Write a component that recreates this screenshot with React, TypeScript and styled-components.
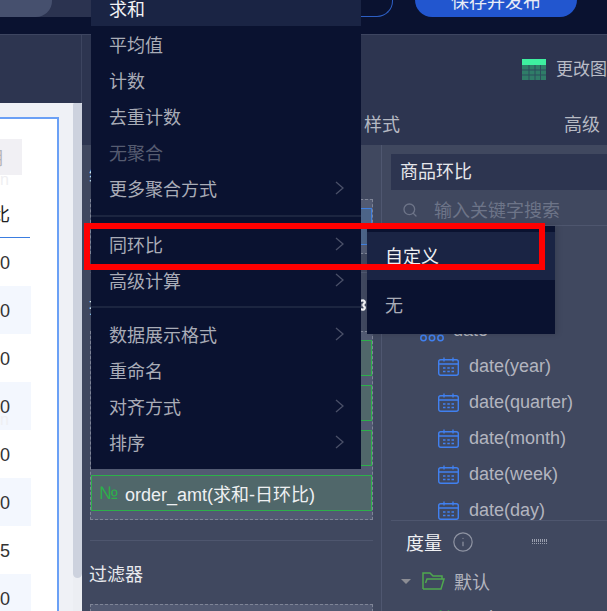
import React from 'react';
import styled, { createGlobalStyle } from 'styled-components';
import { Search, Settings, Info } from 'lucide-react';

const GlobalStyle = createGlobalStyle`
    html, body {
        margin: 0;
        padding: 0;
        background: #0a1230;
    }
    * {
        box-sizing: border-box;
    }
`;

const Page = styled.div`
    position: relative;
    width: 607px;
    height: 611px;
    overflow: hidden;
    background: #0a1230;
    font-family: 'Liberation Sans', 'Noto Sans CJK SC', sans-serif;
    font-size: 18px;
`;

/* top bar */
const TopBar = styled.header`
    display: flex;
    height: 34px;
    background: #0a1230;
`;

const TopStrip = styled.div`
    width: 333px;
    height: 17px;
    background: #2b3350;
`;

const TopPill = styled.div`
    width: 52px;
    height: 17px;
    background: #46506e;
    border-bottom-right-radius: 16px;
`;

const OutlineButton = styled.div`
    width: 60px;
    height: 17px;
    border-right: 1px solid #2d5fc4;
    border-bottom: 1px solid #2d5fc4;
    border-bottom-right-radius: 16px;
`;

const PublishButton = styled.button`
    width: 162px;
    height: 34px;
    margin: -17px 0 0 22px;
    border: 0;
    padding: 0;
    border-radius: 17px;
    background: #2256cf;
    color: #e8ecf6;
    font: inherit;
`;

/* chart toolbar */
const Toolbar = styled.div`
    display: flex;
    align-items: center;
    height: 69px;
    background: #2d3550;
    border-top: 1px solid #3d4560;
    white-space: nowrap;
    overflow: hidden;
`;

const ToolbarLeft = styled.div`
    flex: none;
    align-self: stretch;
    width: 82px;
    border-right: 1px solid #3d4560;
    margin-right: 440px;
`;

const ChartType = styled.div`
    flex: none;
    display: flex;
    align-items: center;
    gap: 10px;
    color: #b9bcc6;
    font-size: 17px;
    line-height: 22px;
`;

const ChartTypeLabel = styled.span`
    padding-top: 1px;
`;

/* body */
const Body = styled.div`
    display: flex;
    height: 508px;
`;

const Canvas = styled.div`
    flex: none;
    width: 73px;
    padding-top: 14px;
    background: #eff1f6;
    overflow: hidden;
`;

const Card = styled.div`
    position: relative;
    width: 59px;
    height: 494px;
    padding-top: 20px;
    background: #fff;
    border-top: 2px solid #6ba0f5;
    border-right: 2px solid #6ba0f5;
`;

const HeadCell = styled.div`
    display: flex;
    justify-content: flex-end;
    align-items: center;
    width: 22px;
    height: 36px;
    padding-right: 19px;
    background: #f1f0f4;
    color: #b5b5b8;
    font-size: 18px;
    white-space: nowrap;
    overflow: hidden;
`;

const ColumnHead = styled.div`
    display: flex;
    align-items: flex-end;
    justify-content: flex-end;
    width: 30px;
    height: 63px;
    padding: 0 20px 11px 0;
    border-bottom: 1px solid #3b7de0;
    color: #222;
    white-space: nowrap;
`;

const Row = styled.div<{ $striped: boolean }>`
    display: flex;
    align-items: center;
    width: 31px;
    height: 48px;
    padding-top: 2px;
    background: ${(props) => (props.$striped ? '#f3f7fe' : '#fff')};
    color: #333;
`;

const Watermark = styled.span<{ $top: number }>`
    position: absolute;
    left: 0;
    top: ${(props) => props.$top}px;
    color: #efeff2;
    font-size: 16px;
`;

const ScrollTrack = styled.div`
    flex: none;
    width: 9px;
    background: #eceef3;
`;

const ScrollThumb = styled.div`
    height: 475px;
    background: #cdd2de;
    border-radius: 2px 2px 6px 6px;
`;

const Editor = styled.div`
    flex: 1;
    min-width: 0;
    display: flex;
    flex-direction: column;
    background: #40485f;
`;

const Tabs = styled.div`
    flex: none;
    display: flex;
    height: 42px;
    background: #2d3550;
    overflow: hidden;
`;

const Tab = styled.div`
    flex: none;
    width: 200px;
    text-align: center;
    line-height: 44px;
    color: #b6b9c3;
`;

const Panels = styled.div`
    flex: 1;
    min-height: 0;
    display: flex;
    overflow: hidden;
`;

/* field config */
const ConfigPanel = styled.div`
    flex: none;
    width: 299px;
    padding: 10px 8px 0;
`;

const SectionLabel = styled.div<{ $gap: number; $after: number }>`
    display: flex;
    justify-content: space-between;
    align-items: center;
    height: 36px;
    margin: ${(props) => props.$gap}px -6px ${(props) => props.$after}px -1px;
    padding-right: 12px;
    color: #e8e9ed;
`;

const DropZone = styled.div`
    display: flex;
    flex-direction: column;
    gap: 9px;
    padding: 8px 0;
    background: #525a72;
    border: 1px dashed #7f8597;
`;

const FieldPill = styled.div<{ $tone: 'blue' | 'green' }>`
    display: flex;
    align-items: center;
    gap: 7px;
    height: ${(props) => (props.$tone === 'blue' ? 37 : 36)}px;
    padding-left: 7px;
    background: ${(props) => (props.$tone === 'blue' ? '#4c6488' : '#50676a')};
    border: 1px solid ${(props) => (props.$tone === 'blue' ? '#3f7fe0' : '#2cb04a')};
    color: #eef0f2;
    white-space: nowrap;
`;

const MeasureMark = styled.span`
    flex: none;
    width: 19px;
    color: #2cb04a;
    font-size: 18px;
`;

const Divider = styled.div<{ $top: number }>`
    height: 1px;
    margin-top: ${(props) => props.$top}px;
    background: #4e566e;
`;

/* data list */
const DataPanel = styled.div`
    flex: 1;
    min-width: 0;
    padding: 9px 0 0 9px;
    border-left: 1px solid #4f5770;
`;

const DatasetName = styled.div`
    height: 36px;
    padding-left: 9px;
    line-height: 37px;
    background: #2d3550;
    color: #e6e7eb;
`;

const SearchRow = styled.div`
    display: flex;
    align-items: center;
    height: 36px;
    padding: 3px 0 0 11px;
    gap: 16px;
    border-bottom: 1px solid #4e566e;
    color: #6d7488;
    white-space: nowrap;
    svg {
        flex: none;
        margin-top: 1px;
    }
`;

const TreeList = styled.div`
    height: 295px;
    padding-top: 86px;
    overflow: hidden;
    border-bottom: 1px solid #4e566e;
`;

const TreeRow = styled.div<{ $indent: number; $gap: number }>`
    display: flex;
    align-items: center;
    gap: ${(props) => props.$gap}px;
    height: 36px;
    padding-left: ${(props) => props.$indent}px;
    color: #b3b5bf;
    white-space: nowrap;
`;

const GroupRow = styled.div`
    display: flex;
    align-items: center;
    height: 42px;
    padding-left: 15px;
    color: #f0f1f4;
`;

const InfoMark = styled.span`
    display: flex;
    margin-left: 10px;
    color: #8f94a3;
`;

const GridMark = styled.svg`
    margin-left: 58px;
`;

const FolderRow = styled.div`
    display: flex;
    align-items: center;
    height: 36px;
    padding-left: 10px;
    color: #b3b5bf;
`;

const FolderName = styled.span`
    margin-left: 9px;
`;

const Caret = styled.span`
    width: 0;
    height: 0;
    margin-right: 11px;
    border-left: 5px solid transparent;
    border-right: 5px solid transparent;
    border-top: 5px solid #8c8d94;
`;

/* overlays */
const Menu = styled.div`
    position: absolute;
    left: 91px;
    top: -10px;
    width: 270px;
    padding-bottom: 9px;
    background: #0a1230;
    z-index: 2;
`;

const MenuItem = styled.div<{ $active?: boolean; $disabled?: boolean }>`
    display: flex;
    justify-content: space-between;
    align-items: center;
    height: 36px;
    padding: 0 16px 0 18px;
    background: ${(props) => (props.$active ? '#1a2444' : 'transparent')};
    color: ${(props) =>
        props.$active ? '#f1f2f5' : props.$disabled ? '#565c70' : '#a9acb7'};
`;

const MenuLine = styled.div<{ $above: number; $below: number }>`
    height: 2px;
    margin: ${(props) => props.$above}px 0 ${(props) => props.$below}px;
    background: #1c2540;
`;

const SubMenu = styled.div`
    position: absolute;
    left: 367px;
    top: 226px;
    width: 188px;
    padding: 6px 0;
    background: #0a1230;
    box-shadow: 2px 0 6px rgba(0, 0, 0, 0.15);
    z-index: 2;
`;

const SubItem = styled.div<{ $active?: boolean }>`
    height: 48px;
    padding-left: 18px;
    line-height: ${(props) => (props.$active ? 50 : 53)}px;
    background: ${(props) => (props.$active ? '#1a2444' : 'transparent')};
    color: ${(props) => (props.$active ? '#eef0f3' : '#a9acb7')};
`;

const Highlight = styled.div`
    position: absolute;
    left: 84px;
    top: 223px;
    width: 461px;
    height: 47px;
    border: 6px solid #f00;
    pointer-events: none;
    z-index: 3;
`;

const Chevron = () => (
    <svg width="10" height="14" viewBox="0 0 10 14" fill="none">
        <path d="M1 1l7 6-7 6" stroke="#4a5068" strokeWidth="1.3" />
    </svg>
);

const TableIcon = () => (
    <svg width="24" height="21" viewBox="0 0 24 21">
        <rect width="24" height="21" fill="#2f7d68" />
        <rect width="24" height="6" fill="#3ef0a0" />
        <path
            d="M0 11h24M0 16h24M7 6v15M13 6v15M18.500 6v15"
            stroke="#2c4f5c"
            strokeWidth="1"
        />
    </svg>
);

const CalendarIcon = () => (
    <svg width="21" height="19" viewBox="0 0 21 19" fill="none" stroke="#4080f0">
        <rect x="0.700" y="2.700" width="19.600" height="15.600" rx="2" strokeWidth="1.400" />
        <path d="M1 7h19M6 0.500v4M15 0.500v4" strokeWidth="1.300" />
        <path
            d="M5 11h2.500M9.300 11h2.500M13.500 11h2.500M5 14.500h2.500M9.300 14.500h2.500M13.500 14.500h2.500"
            strokeWidth="1.500"
        />
    </svg>
);

const DimensionIcon = () => (
    <svg width="24" height="24" viewBox="0 0 24 24" fill="none" stroke="#4080f0" strokeWidth="1.500">
        <circle cx="3.500" cy="20" r="2.700" />
        <circle cx="12" cy="20" r="2.700" />
        <circle cx="20.500" cy="20" r="2.700" />
    </svg>
);

const FolderIcon = () => (
    <svg width="23" height="18" viewBox="0 0 23 18" fill="none" stroke="#4fa84f" strokeWidth="1.500">
        <path d="M1 17V1h7l3 3h9v3" />
        <path d="M1 17h18l3-10H5L3.500 11" />
    </svg>
);

const GridDots = () => (
    <GridMark width="16" height="6" viewBox="0 0 16 6">
        <path
            d="M0.500 0v6M2.500 0v6M4.500 0v6M6.500 0v6M8.500 0v6M10.500 0v6M12.500 0v6M14.500 0v6M0 1.500h16M0 4.500h16"
            stroke="#9a9fae"
            strokeWidth="1"
            strokeDasharray="1 1"
        />
    </GridMark>
);

const rowValues = ['0', '0', '0', '0', '0', '0', '5', '0'];
const dateParts = ['year', 'quarter', 'month', 'week', 'day'];

const menuTop = [
    { label: '求和', active: true },
    { label: '平均值' },
    { label: '计数' },
    { label: '去重计数' },
    { label: '无聚合', disabled: true },
    { label: '更多聚合方式', arrow: true },
];
const menuMiddle = [
    { label: '同环比', arrow: true },
    { label: '高级计算', arrow: true },
];
const menuBottom = [
    { label: '数据展示格式', arrow: true },
    { label: '重命名' },
    { label: '对齐方式', arrow: true },
    { label: '排序', arrow: true },
];

type MenuEntry = { label: string; active?: boolean; disabled?: boolean; arrow?: boolean };

const renderItems = (items: MenuEntry[]) =>
    items.map((item) => (
        <MenuItem key={item.label} $active={item.active} $disabled={item.disabled}>
            {item.label}
            {item.arrow && <Chevron />}
        </MenuItem>
    ));

const App = () => {
    return (
        <Page>
            <GlobalStyle />
            <TopBar>
                <TopStrip>
                    <TopPill />
                </TopStrip>
                <OutlineButton />
                <PublishButton>保存并发布</PublishButton>
            </TopBar>
            <Toolbar>
                <ToolbarLeft />
                <ChartType>
                    <TableIcon />
                    <ChartTypeLabel>更改图表类型</ChartTypeLabel>
                </ChartType>
            </Toolbar>
            <Body>
                <Canvas>
                    <Card>
                        <HeadCell>日期</HeadCell>
                        <ColumnHead>环比</ColumnHead>
                        {rowValues.map((value, index) => (
                            <Row key={index} $striped={index % 2 === 1}>
                                {value}
                            </Row>
                        ))}
                        <Watermark $top={52}>n</Watermark>
                        <Watermark $top={292}>n</Watermark>
                    </Card>
                </Canvas>
                <ScrollTrack>
                    <ScrollThumb />
                </ScrollTrack>
                <Editor>
                    <Tabs>
                        <Tab>数据</Tab>
                        <Tab>样式</Tab>
                        <Tab>高级</Tab>
                    </Tabs>
                    <Panels>
                        <ConfigPanel>
                            <SectionLabel $gap={0} $after={8}>维度</SectionLabel>
                            <DropZone>
                                <FieldPill $tone="blue" />
                            </DropZone>
                            <Divider $top={18} />
                            <SectionLabel $gap={14} $after={8}>
                                指标
                                <Settings size={18} strokeWidth={3} color="#f0f1f4" />
                            </SectionLabel>
                            <DropZone>
                                <FieldPill $tone="green" />
                                <FieldPill $tone="green" />
                                <FieldPill $tone="green" />
                                <FieldPill $tone="green">
                                    <MeasureMark>№</MeasureMark>
                                    order_amt(求和-日环比)
                                </FieldPill>
                            </DropZone>
                            <Divider $top={20} />
                            <SectionLabel $gap={14} $after={13}>过滤器</SectionLabel>
                            <DropZone />
                        </ConfigPanel>
                        <DataPanel>
                            <DatasetName>商品环比</DatasetName>
                            <SearchRow>
                                <Search size={16} color="#6d7488" />
                                输入关键字搜索
                            </SearchRow>
                            <TreeList>
                                <TreeRow $indent={29} $gap={9}>
                                    <DimensionIcon />
                                    date
                                </TreeRow>
                                {dateParts.map((part) => (
                                    <TreeRow key={part} $indent={47} $gap={10}>
                                        <CalendarIcon />
                                        date({part})
                                    </TreeRow>
                                ))}
                            </TreeList>
                            <GroupRow>
                                度量
                                <InfoMark>
                                    <Info size={22} strokeWidth={1.3} />
                                </InfoMark>
                                <GridDots />
                            </GroupRow>
                            <FolderRow>
                                <Caret />
                                <FolderIcon />
                                <FolderName>默认</FolderName>
                            </FolderRow>
                            <TreeRow $indent={47} $gap={10}>
                                <MeasureMark>№</MeasureMark>
                                order_amt
                            </TreeRow>
                        </DataPanel>
                    </Panels>
                </Editor>
            </Body>
            <Menu>
                {renderItems(menuTop)}
                <MenuLine $above={9} $below={9} />
                {renderItems(menuMiddle)}
                <MenuLine $above={8} $below={8} />
                {renderItems(menuBottom)}
            </Menu>
            <SubMenu>
                <SubItem $active>自定义</SubItem>
                <SubItem>无</SubItem>
            </SubMenu>
            <Highlight />
        </Page>
    );
};

export default App;
